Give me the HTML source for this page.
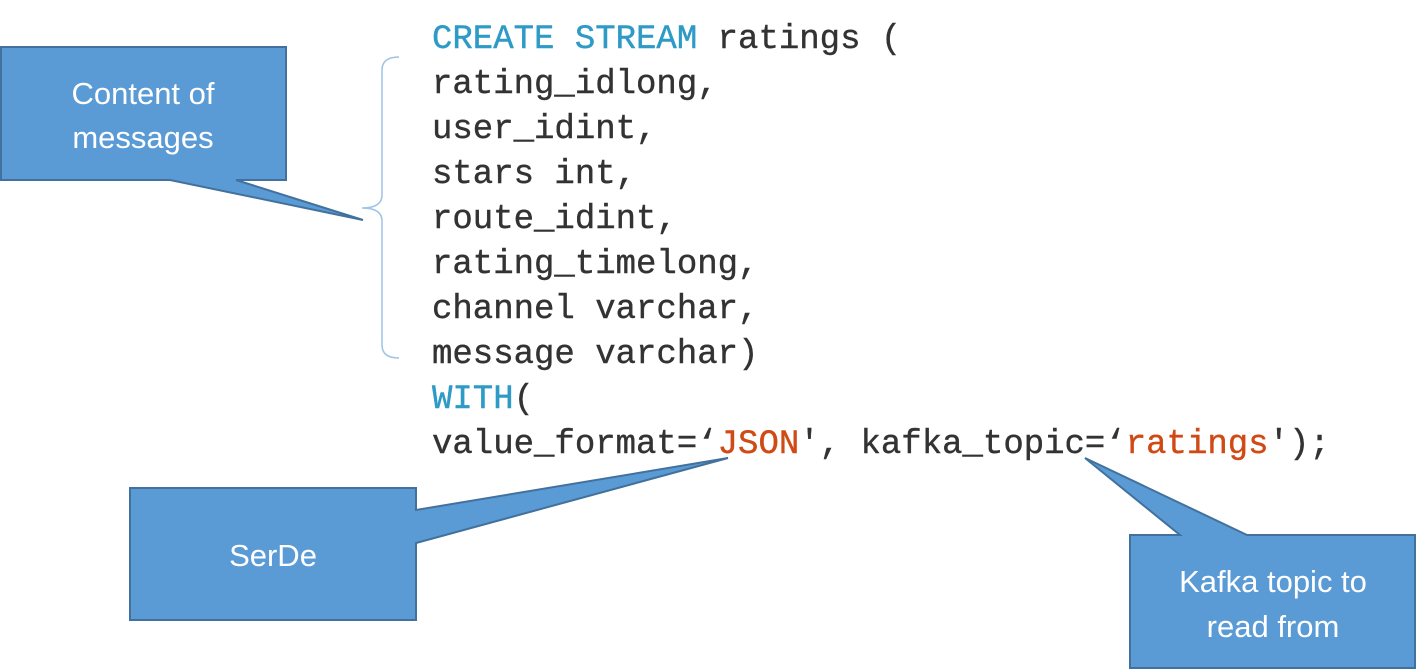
<!DOCTYPE html>
<html><head><meta charset="utf-8"><style>html,body{margin:0;padding:0;background:#fff;width:1417px;height:670px;overflow:hidden}</style></head>
<body>
<svg width="1417" height="670" viewBox="0 0 1417 670" xmlns="http://www.w3.org/2000/svg">
<g fill="#5b9bd5" stroke="#41719c" stroke-width="2">
<path d="M1,47 H286 V180 H236 L363,220 L170,180 H1 Z"/>
<path d="M130,488 H416 V510 L728,458 L416,543 V620 H130 Z"/>
<path d="M1130,535 H1180 L1085,458 L1247,535 H1415 V668 H1130 Z"/>
</g>
<path d="M399,57 Q382,57 382,70 V195 Q382,208 362,208 Q382,208 382,221 V345 Q382,358 399,358" fill="none" stroke="#9dc3e6" stroke-width="1.5"/>
<g font-family="Liberation Sans, sans-serif" font-size="31" fill="#fff" text-anchor="middle">
<text x="143" y="104">Content of</text>
<text x="143" y="148">messages</text>
<text x="273" y="566">SerDe</text>
<text x="1273" y="592">Kafka topic to</text>
<text x="1273" y="637">read from</text>
</g>
<g font-family="Liberation Mono, monospace" font-size="34" fill="#333" stroke="#333" stroke-width="0.4" xml:space="preserve">
<text x="432" y="48"><tspan fill="#2e9ac6" stroke="#2e9ac6">CREATE STREAM</tspan> ratings (</text>
<text x="432" y="93">rating_idlong,</text>
<text x="432" y="138">user_idint,</text>
<text x="432" y="183">stars int,</text>
<text x="432" y="228">route_idint,</text>
<text x="432" y="273">rating_timelong,</text>
<text x="432" y="318">channel varchar,</text>
<text x="432" y="363">message varchar)</text>
<text x="432" y="408"><tspan fill="#2e9ac6" stroke="#2e9ac6">WITH</tspan>(</text>
<text x="432" y="453">value_format=‘<tspan fill="#d04a16" stroke="#d04a16">JSON</tspan>', kafka_topic=‘<tspan fill="#d04a16" stroke="#d04a16">ratings</tspan>');</text>
</g>
</svg>
</body></html>
